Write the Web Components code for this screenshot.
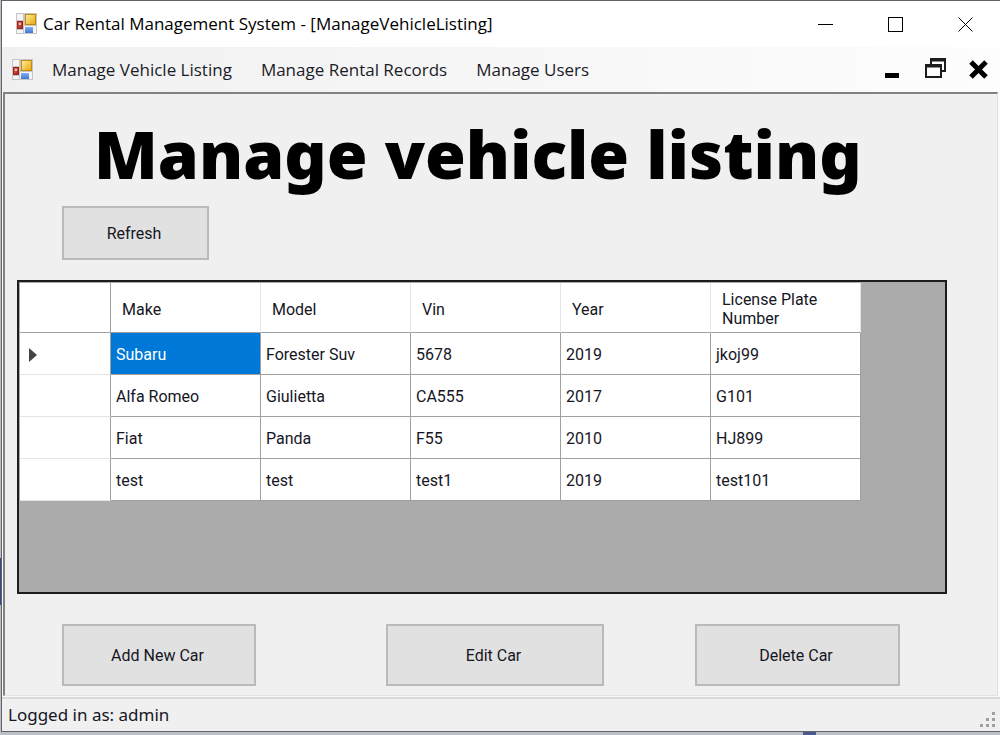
<!DOCTYPE html>
<html lang="en">
<head>
<meta charset="utf-8">
<title>Car Rental Management System</title>
<style>
html, body { height: 100%; margin: 0; }
body { font-family: "Open Sans", "Noto Sans", sans-serif; color: #000; background: #b9b9bb; overflow: hidden; }
</style>
</head>
<body>
<rental-window></rental-window>
<script>
const define = (name, html, setup) => customElements.define(name, class extends HTMLElement {
  constructor() {
    super();
    const template = document.createElement('template');
    template.innerHTML = html;
    this.attachShadow({ mode: 'open' }).append(template.content.cloneNode(true));
  }
  connectedCallback() { if (setup) setup.call(this, this.shadowRoot); }
});

define('form-icon', `
<style>:host{display:block;width:21px;height:21px} svg{display:block}</style>
<svg width="21" height="21" viewBox="0 0 21 21" aria-hidden="true">
  <defs>
    <linearGradient id="y" x2="1" y2="1"><stop stop-color="#ffeb9a"/><stop offset="1" stop-color="#e9aa10"/></linearGradient>
    <linearGradient id="r" x2="1" y2="1"><stop stop-color="#e0705a"/><stop offset="1" stop-color="#a81c16"/></linearGradient>
    <linearGradient id="b" x2="0" y2="1"><stop stop-color="#86b0f4"/><stop offset="1" stop-color="#3e74d2"/></linearGradient>
  </defs>
  <rect width="21" height="21" fill="#c6c6c6"/>
  <path d="M1 1h6v6H1zM1 17h6v3H1zM8 13h12v7H8z" fill="#f4f4f4"/>
  <rect x="9" y="1" width="11" height="11" fill="#c18b10"/><rect x="10" y="2" width="9" height="9" fill="url(#y)"/>
  <rect x="1" y="8" width="6" height="8" fill="#a02019"/><rect x="2" y="9" width="4" height="6" fill="url(#r)"/><path d="M3 10h2v2H3z" fill="#f5c1b4"/>
  <rect x="9" y="14" width="8" height="6" fill="url(#b)"/>
</svg>`);

define('title-bar', `
<style>
:host{display:flex;align-items:center;height:46px;background:#fff;padding-left:14px;font-size:17px;line-height:24px}
span{flex:1;margin-left:6px;white-space:nowrap}
form-icon{margin-bottom:2px}
button{width:70px;height:46px;padding:0;border:0;background:none;display:grid;place-items:center}
svg{display:block;fill:none;stroke:#000;shape-rendering:crispEdges}
</style>
<form-icon></form-icon><span><slot></slot></span>
<button aria-label="Minimize"><svg width="15" height="15"><path d="M0 7.500h15"/></svg></button>
<button aria-label="Maximize"><svg width="15" height="15"><path d="M.5.5h14v14H.5z"/></svg></button>
<button aria-label="Close"><svg width="15" height="15" style="shape-rendering:auto"><path d="M.5.5l14 14M14.500.5l-14 14"/></svg></button>`);

define('menu-strip', `
<style>
:host{display:flex;align-items:center;height:45px;padding:0 11px 0 10px;background:linear-gradient(90deg,#f0f0f0,#fdfdfd)}
nav{display:flex;flex:1;gap:29px;margin-left:19px;font-size:17px;line-height:24px}
a{color:#1c1c28;text-decoration:none;white-space:nowrap}
.mdi{display:flex;gap:21px}
button{width:22px;height:24px;padding:0;border:0;background:none}
svg{display:block}
</style>
<form-icon></form-icon>
<nav aria-label="Main"><a href="#vehicles">Manage Vehicle Listing</a><a href="#records">Manage Rental Records</a><a href="#users">Manage Users</a></nav>
<div class="mdi">
<button aria-label="Minimize child"><svg width="22" height="24"><path d="M4 15h14v5H4z" fill="#000"/></svg></button>
<button aria-label="Restore child"><svg width="22" height="24" fill="none" stroke="#1c1c1c" stroke-width="2"><path d="M7 7V1h14v12h-4M7 2.500h14M2 7h15v12H2zM2 8.500h15"/></svg></button>
<button aria-label="Close child"><svg width="22" height="24" stroke="#000" stroke-width="5"><path d="M4 4l15 15M19 4L4 19"/></svg></button>
</div>`);

define('form-button', `
<style>
:host{display:block}
button{box-sizing:border-box;width:100%;height:100%;border:2px solid #bababa;background:#e1e1e1;padding:2px 3px 0 0;font:16px/24px Roboto,sans-serif;color:#16161f}
</style><button><slot></slot></button>`);

define('vehicle-grid', `
<style>
:host{display:block;box-sizing:border-box;height:314px;padding:1px 0 0 1px;border:2px solid #1c1c1c;background:#ababab;overflow:hidden}
table{table-layout:fixed;width:841px;border-spacing:0;font:16px/19px Roboto,sans-serif;color:#16161f}
th,td{box-sizing:border-box;background:#fff;font-weight:400;text-align:left;border-right:1px solid #a0a0a0;border-bottom:1px solid #a0a0a0;white-space:nowrap}
td{height:42px;padding:2px 5px 0}
thead th{height:50px;padding:3px 11px 0;border-right-color:#e5e5e5;border-bottom-color:#a0a0a0;white-space:normal}
thead :first-child{border-right-color:#a0a0a0}
tbody th{padding:2px 9px 0;border-bottom-color:#e5e5e5}
.selected{background:#0078d7;color:#fff}
svg{display:block}
</style>
<table><colgroup><col style="width:91px"><col span="5"></colgroup>
<thead><tr><th></th><th scope="col">Make</th><th scope="col">Model</th><th scope="col">Vin</th><th scope="col">Year</th><th scope="col">License Plate Number</th></tr></thead><tbody></tbody></table>`,
function (root) {
  const rows = [
    ['Subaru', 'Forester Suv', '5678', '2019', 'jkoj99'],
    ['Alfa Romeo', 'Giulietta', 'CA555', '2017', 'G101'],
    ['Fiat', 'Panda', 'F55', '2010', 'HJ899'],
    ['test', 'test', 'test1', '2019', 'test101']
  ];
  const marker = '<svg width="9" height="14"><path d="M0 0l8 7-8 7z" fill="#444"/></svg>';
  root.querySelector('tbody').innerHTML = rows.map((row, r) =>
    `<tr><th>${r ? '' : marker}</th>${row.map((v, c) => `<td${r + c ? '' : ' class="selected"'}>${v}</td>`).join('')}</tr>`).join('');
});

define('listing-form', `
<style>
:host{display:flex;flex-direction:column;box-sizing:border-box;flex:1;padding:13px 50px 0 12px;background:#f0f0f0;border:2px solid #828282;border-right:1px solid #e2e2e2;border-bottom:1px solid #e2e2e2;margin:0 2px 0 1px}
h1{margin:0 0 0 77px;font:900 66px/92px "Noto Sans",sans-serif;white-space:nowrap}
.refresh{width:147px;height:54px;margin:7px 0 20px 45px}
.actions{display:grid;grid-template-columns:194fr 130fr 218fr 91fr 205fr;margin:30px 47px 0 45px;height:62px}
.actions :nth-child(2){grid-column:3}
.actions :nth-child(3){grid-column:5}
</style>
<h1>Manage vehicle listing</h1>
<form-button class="refresh">Refresh</form-button>
<vehicle-grid></vehicle-grid>
<div class="actions"><form-button>Add New Car</form-button><form-button>Edit Car</form-button><form-button>Delete Car</form-button></div>`);

define('status-strip', `
<style>
:host{display:flex;align-items:center;justify-content:space-between;height:32px;padding:0 4px 0 6px;background:#f0f0f0;border-top:2px solid #dadada;margin-top:1px;font:17px/24px "Noto Sans",sans-serif;color:#16161f}
svg{display:block;align-self:end;margin-bottom:3px}
</style>
<span><slot></slot></span>
<svg width="17" height="17" fill="#a0a0a0" aria-hidden="true"><path d="M13 1h3v3h-3zM7 7h3v3H7zM13 7h3v3h-3zM1 13h3v3H1zM7 13h3v3H7zM13 13h3v3h-3z"/></svg>`);

define('rental-window', `
<style>
:host{display:flex;flex-direction:column;box-sizing:border-box;min-height:100vh;padding:0 0 3px 1px;
background:linear-gradient(#4a5a8c,#4a5a8c) 803px 100%/13px 3px no-repeat,linear-gradient(#344a86,#344a86) 0 558px/1px 47px no-repeat,#bcbfc6}
main{display:flex;flex-direction:column;flex:1;border:1px solid #62626a;border-right:0;background:#fafafa}
</style>
<main>
<title-bar>Car Rental Management System - [ManageVehicleListing]</title-bar>
<menu-strip></menu-strip>
<listing-form></listing-form>
<status-strip>Logged in as: admin</status-strip>
</main>`);
</script>
</body>
</html>
